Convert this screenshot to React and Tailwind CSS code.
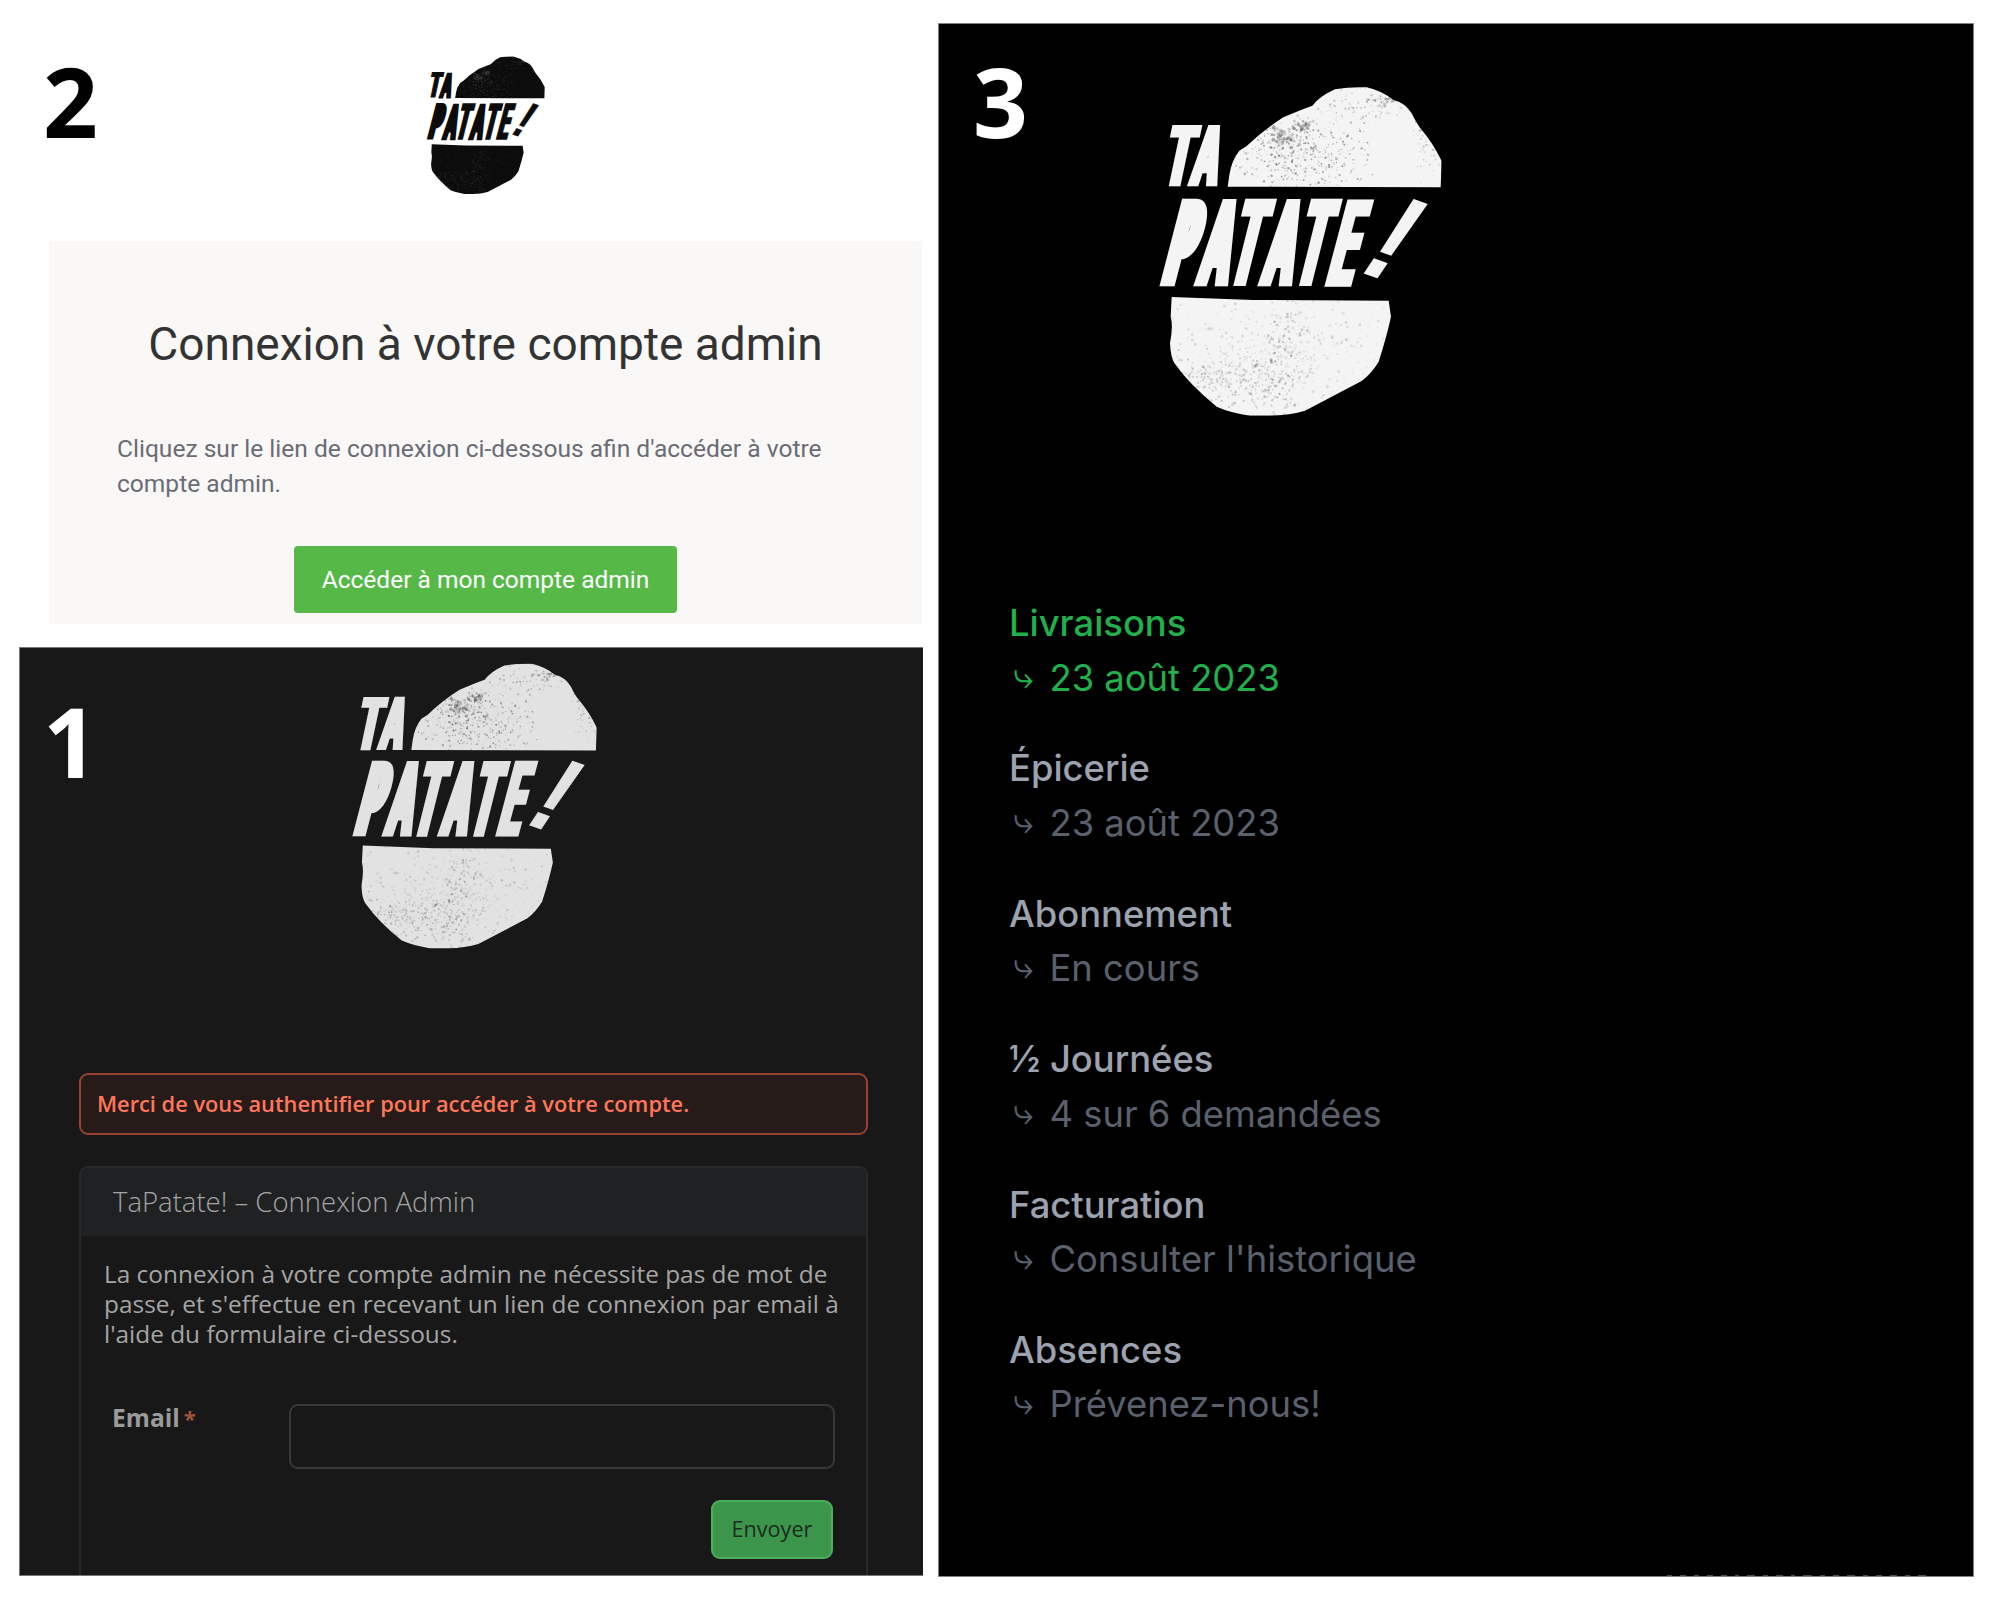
import React from "react";

// Deterministic pseudo-random generator for the printed-ink speckle.
function makeRandom(seed) {
  let s = seed;
  return () => {
    s = (s * 16807) % 2147483647;
    return s / 2147483647;
  };
}

function scatter(seed, n, cx, cy, rx, ry, minOpacity, maxOpacity, size) {
  const rnd = makeRandom(seed);
  const out = [];
  for (let i = 0; i < n; i++) {
    const gx = rnd() + rnd() + rnd() - 1.5;
    const gy = rnd() + rnd() + rnd() - 1.5;
    out.push({
      x: Math.round(cx + gx * rx),
      y: Math.round(cy + gy * ry),
      r: (size * (0.5 + rnd())).toFixed(1),
      o: (minOpacity + rnd() * (maxOpacity - minOpacity)).toFixed(2),
    });
  }
  return out;
}

const SPECKS = [
  ...scatter(11, 420, 550, 290, 180, 100, 0.12, 0.5, 2.4),
  ...scatter(23, 60, 495, 225, 40, 30, 0.1, 0.4, 4),
  ...scatter(29, 40, 550, 200, 30, 25, 0.1, 0.4, 4),
  ...scatter(37, 110, 750, 140, 180, 70, 0.1, 0.35, 2.4),
  ...scatter(41, 50, 800, 115, 50, 20, 0.15, 0.4, 3),
  ...scatter(43, 60, 930, 270, 50, 90, 0.1, 0.3, 2.4),
  ...scatter(53, 280, 340, 960, 170, 90, 0.08, 0.3, 2.8),
  ...scatter(61, 190, 490, 900, 80, 190, 0.08, 0.3, 2.8),
  ...scatter(67, 420, 470, 870, 360, 190, 0.04, 0.14, 3.4),
];

// Letters of the wordmark: [char, x, baseline, height, width, stroke, slant]
const LETTERS = [
  ["T", 116, 379, 184, 97, 8, -0.21],
  ["A", 201, 379, 184, 95, 20, -0.2],
  ["P", 104, 679, 262, 124, 37, -0.26],
  ["A", 217, 679, 262, 116, 32, -0.22],
  ["T", 307, 679, 262, 106, 12, -0.25],
  ["A", 409, 679, 262, 116, 32, -0.22],
  ["T", 504, 679, 262, 106, 12, -0.25],
  ["E", 598, 679, 262, 108, 10, -0.265],
];

function PotatoLogo({ id, className, ink, speck }) {
  return (
    <svg viewBox="0 0 1080 1110" className={className} role="img" aria-label="Ta Patate !">
      <defs>
        <clipPath id={id}>
          <path d="M323 380 L328 345 Q335 300 358 272 L380 258 Q430 210 490 172 Q540 150 577 137 Q600 108 645 88 Q690 80 740 82 Q785 92 820 120 Q855 128 875 160 Q890 190 900 203 Q940 250 965 303 L962 382 Z" />
          <path d="M155 711 L400 720 L806 722 L813 770 Q800 830 776 905 Q755 940 725 963 Q640 1008 555 1052 Q510 1066 450 1067 L390 1067 Q330 1058 290 1040 Q210 975 165 912 Q152 895 150 850 Q160 800 152 770 Z" />
        </clipPath>
      </defs>
      <g clipPath={`url(#${id})`}>
        <rect width="1080" height="1110" fill={ink} />
        {SPECKS.map((s, i) => (
          <circle key={i} cx={s.x} cy={s.y} r={s.r} fill={speck} opacity={s.o} />
        ))}
      </g>
      <g fill={ink} stroke={ink} className="font-['Open_Sans'] font-bold [font-stretch:75%]">
        {LETTERS.map(([ch, x, y, h, w, sw, k], i) => (
          <text
            key={i}
            transform={`matrix(1 0 ${k} 1 ${x + sw / 2} ${y - sw / 2})`}
            fontSize={(h - sw) / 0.714}
            textLength={w - sw}
            lengthAdjust="spacingAndGlyphs"
            strokeWidth={sw}
          >
            {ch}
          </text>
        ))}
      </g>
      <text
        transform="matrix(0.7 0.25 -0.55 0.82 708 630)"
        fontSize="390"
        fill={ink}
        stroke={ink}
        strokeWidth="4"
        className="font-['Liberation_Sans'] font-bold"
      >
        !
      </text>
    </svg>
  );
}

const MENU = [
  { title: "Livraisons", detail: "23 août 2023", active: true },
  { title: "Épicerie", detail: "23 août 2023" },
  { title: "Abonnement", detail: "En cours" },
  { title: "½ Journées", detail: "4 sur 6 demandées" },
  { title: "Facturation", detail: "Consulter l'historique" },
  { title: "Absences", detail: "Prévenez-nous!" },
];

// Widths of the marks left by the text line cut at the panel's lower edge.
const SLIVER = [5, 6, 5, 6, 6, 4, 8, 5, 7, 4, 9, 5, 6, 8, 5, 6, 7, 5, 8];

function StepNumber({ children, className }) {
  return <span className={`absolute font-['Open_Sans'] text-[96px] leading-none font-bold ${className}`}>{children}</span>;
}

function EmailPreview() {
  return (
    <section className="relative h-[647px] pl-[49px] pt-[45px]">
      <StepNumber className="left-[43px] top-[53px] text-black">2</StepNumber>
      <PotatoLogo id="logo-mail" className="ml-[361px] h-[155px] w-[151px]" ink="#0c0c0c" speck="#8a8a8a" />
      <div className="mt-[41px] flex h-[383px] w-[873px] flex-col items-center bg-[#f9f8f6] pt-[76px] font-[Roboto]">
        <h1 className="text-[46px] leading-[54px] whitespace-nowrap text-[#333333]">Connexion à votre compte admin</h1>
        <p className="mt-[60px] w-full pl-[68px] text-[24.55px] leading-[35.4px] whitespace-nowrap text-[#6b6b76]">
          Cliquez sur le lien de connexion ci-dessous afin d'accéder à votre
          <br />
          compte admin.
        </p>
        <a className="mt-[44px] flex h-[67px] w-[383px] items-center justify-center rounded-[4px] bg-[#56b947] pt-[2px] text-[24.5px] whitespace-nowrap text-white">
          Accéder à mon compte admin
        </a>
      </div>
    </section>
  );
}

function LoginPanel() {
  return (
    <section className="relative ml-[19px] flex h-[929px] w-[904px] flex-col overflow-hidden border-y border-l border-[#777777] bg-[#181818] px-[59px] font-['Open_Sans']">
      <StepNumber className="left-[23px] top-[45px] text-white">1</StepNumber>
      <PotatoLogo id="logo-login" className="-mt-[8px] ml-[239px] h-[321px] w-[312px] shrink-0" ink="#e2e2e2" speck="#303030" />
      <div className="mt-[112px] flex h-[62px] w-[789px] shrink-0 items-center rounded-[9px] border-2 border-[#96422f] bg-[#261b19] pt-[1px] pl-[16px] text-[21.8px] font-semibold whitespace-nowrap text-[#ff7758]">
        Merci de vous authentifier pour accéder à votre compte.
      </div>
      <div className="mt-[31px] h-[460px] w-[789px] shrink-0 rounded-t-[9px] border-2 border-[#27292b]">
        <div className="flex h-[68px] items-center rounded-t-[7px] bg-[#202123] pl-[32px] text-[27.5px] font-light whitespace-nowrap text-[#a5a5a5]">
          TaPatate! – Connexion Admin
        </div>
        <p className="mt-[23px] pl-[23px] text-[24.4px] leading-[30.2px] whitespace-nowrap text-[#a5a5a5]">
          La connexion à votre compte admin ne nécessite pas de mot de
          <br />
          <span className="tracking-[0.03px]">passe, et s'effectue en recevant un lien de connexion par email à</span>
          <br />
          l'aide du formulaire ci-dessous.
        </p>
        <div className="mt-[54px] flex pl-[31px]">
          <label className="-mt-[1px] w-[177px] text-[24.6px] leading-[30px] font-bold text-[#9b9b9b]">
            Email<span className="ml-[4px] text-[22px] text-[#a0523f]">*</span>
          </label>
          <div className="h-[65px] w-[546px] rounded-[9px] border-2 border-[#383838]" />
        </div>
        <div className="mt-[31px] flex justify-end pr-[33px]">
          <button className="h-[59px] w-[122px] rounded-[9px] border-2 border-[#4aae5b] bg-[#3b964b] text-[21.6px] text-[#1c2b1e]">Envoyer</button>
        </div>
      </div>
    </section>
  );
}

function AccountPanel() {
  return (
    <section className="relative mt-[23px] ml-[15px] h-[1554px] w-[1036px] overflow-hidden border border-[#808080] bg-black font-[Inter]">
      <StepNumber className="left-[34px] top-[29px] text-white">3</StepNumber>
      <PotatoLogo id="logo-account" className="mt-[36px] ml-[181px] h-[370px] w-[360px]" ink="#f4f4f4" speck="#3c3c3c" />
      <nav className="mt-[166px] flex flex-col gap-[36.4px] pl-[70px]">
        {MENU.map((item) => (
          <a key={item.title} className={`text-[36.36px] leading-[54.5px] whitespace-nowrap ${item.active ? "text-[#20b04c]" : "text-[#9ca3af]"}`}>
            <div className="font-medium">{item.title}</div>
            <div className={`flex ${item.active ? "text-[#20b04c]" : "text-[#5a606c]"}`}>
              <span className="-mt-[3px] mb-[3px] w-[40.5px] pl-[4px]">⤷</span>
              <span>{item.detail}</span>
            </div>
          </a>
        ))}
      </nav>
      <div className="absolute bottom-0 left-[728px] flex h-px gap-[8px]">
        {SLIVER.map((w, i) => (
          <span key={i} className="h-px bg-[#4a4d55]" style={{ width: w }} />
        ))}
      </div>
    </section>
  );
}

export default function App() {
  return (
    <main className="flex h-[1600px] w-[2000px] overflow-hidden bg-white">
      <div className="w-[923px] shrink-0">
        <EmailPreview />
        <LoginPanel />
      </div>
      <AccountPanel />
    </main>
  );
}
